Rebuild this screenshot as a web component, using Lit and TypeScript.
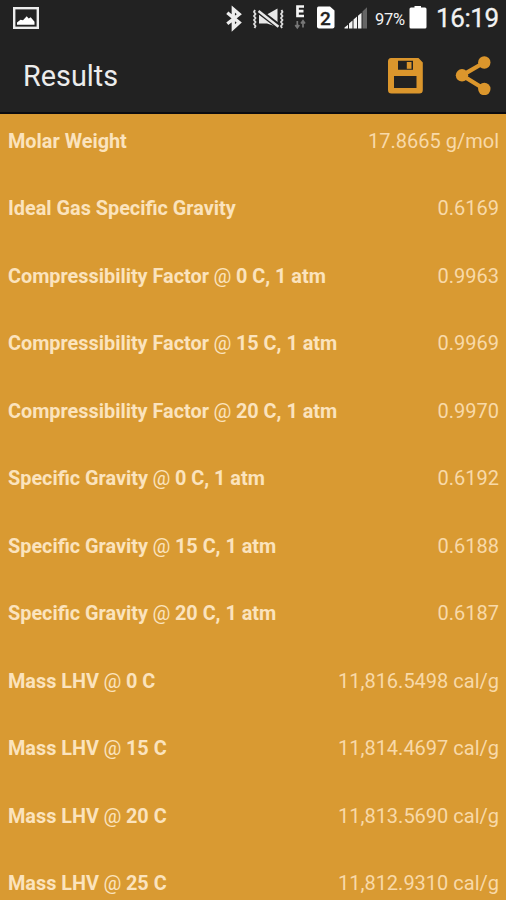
import { LitElement, html, css } from "lit";
import { customElement, property } from "lit/decorators.js";

const RESULTS: [string, string][] = [
  ["Molar Weight", "17.8665 g/mol"],
  ["Ideal Gas Specific Gravity", "0.6169"],
  ["Compressibility Factor @ 0 C, 1 atm", "0.9963"],
  ["Compressibility Factor @ 15 C, 1 atm", "0.9969"],
  ["Compressibility Factor @ 20 C, 1 atm", "0.9970"],
  ["Specific Gravity @ 0 C, 1 atm", "0.6192"],
  ["Specific Gravity @ 15 C, 1 atm", "0.6188"],
  ["Specific Gravity @ 20 C, 1 atm", "0.6187"],
  ["Mass LHV @ 0 C", "11,816.5498 cal/g"],
  ["Mass LHV @ 15 C", "11,814.4697 cal/g"],
  ["Mass LHV @ 20 C", "11,813.5690 cal/g"],
  ["Mass LHV @ 25 C", "11,812.9310 cal/g"],
];

@customElement("status-bar")
class StatusBar extends LitElement {
  static styles = css`
    :host { display: flex; height: 37px; align-items: flex-start; color: #f2f2f2; box-sizing: border-box; padding-right: 7px; }
    svg { display: block; flex: none; height: 37px; }
    .picture { margin-left: 12px; }
    .spacer { flex: 1; }
    .percent { width: 33px; font-size: 16.5px; line-height: 37px; margin-top: 1px; white-space: nowrap; letter-spacing: -0.3px; }
    .clock { width: 63px; font-size: 26px; line-height: 37px; white-space: nowrap; margin-left: 8px; letter-spacing: -0.4px; -webkit-text-stroke: 0.3px; }
  `;
  render() {
    return html`
      <svg class="picture" width="28" viewBox="12 0 28 37">
        <rect x="14.2" y="8.2" width="23.6" height="19.6" fill="none" stroke="#ececec" stroke-width="2.4" />
        <path d="M17 24.8v-2.3l3.500-2.800 2.500.5 3.700-4 2 2.400 2-1.300 3.800 4.500v3z" fill="#fff" />
      </svg>
      <span class="spacer"></span>
      <svg width="160" viewBox="215 0 160 37">
        <path d="M227.300 12.800l12 9.800-6 5.400V9l6 5.200-12 9.600" fill="none" stroke="#eee" stroke-width="3.300" />
        <path d="M259 15h7l11.500-6.500v17.500h-3l-7.500-2.500h-8z" fill="#e8e8e8" />
        <path d="M257.500 10l22 17" stroke="#222" stroke-width="5.600" />
        <path d="M258.500 11l20 15.700" stroke="#e8e8e8" stroke-width="2.500" />
        <path d="M255 10l-1 2 1.500 2-1.500 2 1.500 2-1.500 2 1.500 2-1.500 2 1.500 2-1 2M281.500 10l1 2-1.500 2 1.500 2-1.500 2 1.500 2-1.500 2 1.500 2-1.500 2 1 2" fill="none" stroke="#dedede" stroke-width="1.800" />
        <path d="M304 6.500h-6.500v9.500h6.500M297.500 11.200h6" fill="none" stroke="#f5f5f5" stroke-width="2.700" />
        <path d="M297.300 21v6.500m-2-2.500l2 2.800 2-2.800M303 27.500v-6.500m-2 2.500l2-2.800 2 2.800" fill="none" stroke="#777" stroke-width="1.700" />
        <path d="M318.500 6.500h11.500l4.500 4v16q0 2-2 2h-13.500q-2 0-2-2v-18q0-2 1.500-2z" fill="#fff" />
        <text x="325.500" y="24.500" text-anchor="middle" font-family="Roboto, sans-serif" font-size="19" font-weight="500" fill="#222" stroke="#222" stroke-width=".3">2</text>
        <g fill="#f2f2f2">
          <path d="M344.500 28.500v-1l3.500-2.800v3.800zM349 28.500v-5l3.500-3v8zM353.500 28.500v-9l3.500-3v12zM358 28.500v-12.700l3.500-3v15.700z" />
          <path d="M362.500 28.500v-17l4.500-4.200v21.200z" fill="#666" />
        </g>
      </svg>
      <span class="percent">97%</span>
      <svg width="20" viewBox="409 0 20 37">
        <path d="M411.500 7.500h4V6h6.500v1.500h4q1.500 0 1.500 1.500v18q0 1.500-1.500 1.500h-14q-1.500 0-1.500-1.500V9q0-1.500 1.500-1.500z" fill="#fff" />
      </svg>
      <span class="clock">16:19</span>
    `;
  }
}

@customElement("action-bar")
class ActionBar extends LitElement {
  @property() heading = "";
  static styles = css`
    :host { display: flex; height: 77px; box-sizing: border-box; border-bottom: 2px solid #0b0b10; align-items: center; padding: 0 13px 0 23px; }
    h1 { flex: 1; margin: 0; padding-top: 3px; font-size: 28.8px; font-weight: 400; line-height: 34px; color: #ececec; }
    svg { display: block; }
    .save { margin-right: 31px; }
  `;
  render() {
    return html`
      <h1>${this.heading}</h1>
      <svg class="save" width="37" height="38" viewBox="387 56 37 38">
        <path fill="#db962c" fill-rule="evenodd" d="M391 58h27.500l4.300 4.500V90q0 3.500-3.500 3.500H391.500q-3.500 0-3.500-3.500V61.500q0-3.500 3-3.500zM398 60.800v9h15v-9zM394 76v12h22.500V76z" />
        <path fill="#db962c" d="M406.800 62h4.700v6.800h-4.700z" />
      </svg>
      <svg width="38" height="40" viewBox="455 55 38 40">
        <path d="M484.300 62.500L462 75.300l22.300 13.700" fill="none" stroke="#db962c" stroke-width="4.300" />
        <g fill="#db962c">
          <circle cx="484.300" cy="62.500" r="6.200" />
          <circle cx="462" cy="75.300" r="6.200" />
          <circle cx="484.300" cy="89" r="6.200" />
        </g>
      </svg>
    `;
  }
}

@customElement("result-row")
class ResultRow extends LitElement {
  @property() label = "";
  @property() value = "";
  static styles = css`
    :host { display: flex; justify-content: space-between; align-items: baseline; height: 67.5px; box-sizing: border-box; padding: 14.8px 7px 0 8px; font-size: 20px; line-height: 24px; white-space: nowrap; }
    .label { font-weight: 700; font-size: 19.85px; color: #fbe3bd; }
    .at { font-weight: 400; margin: 0 -0.4px; }
    .value { color: #f8d9a8; }
  `;
  render() {
    const [before, after] = this.label.split("@");
    return html`<span class="label">${before}${after ? html`<span class="at">@</span>${after}` : ""}</span><span class="value">${this.value}</span>`;
  }
}

@customElement("app-root")
class AppRoot extends LitElement {
  static styles = css`
    :host { display: flex; flex-direction: column; height: 900px; overflow: hidden; background: #222; font-family: Roboto, sans-serif; }
    main { flex: 1; min-height: 0; overflow: hidden; background: #d99a32; }
  `;
  render() {
    return html`
      <status-bar></status-bar>
      <action-bar heading="Results"></action-bar>
      <main>${RESULTS.map(([l, v]) => html`<result-row label=${l} value=${v}></result-row>`)}</main>
    `;
  }
}
